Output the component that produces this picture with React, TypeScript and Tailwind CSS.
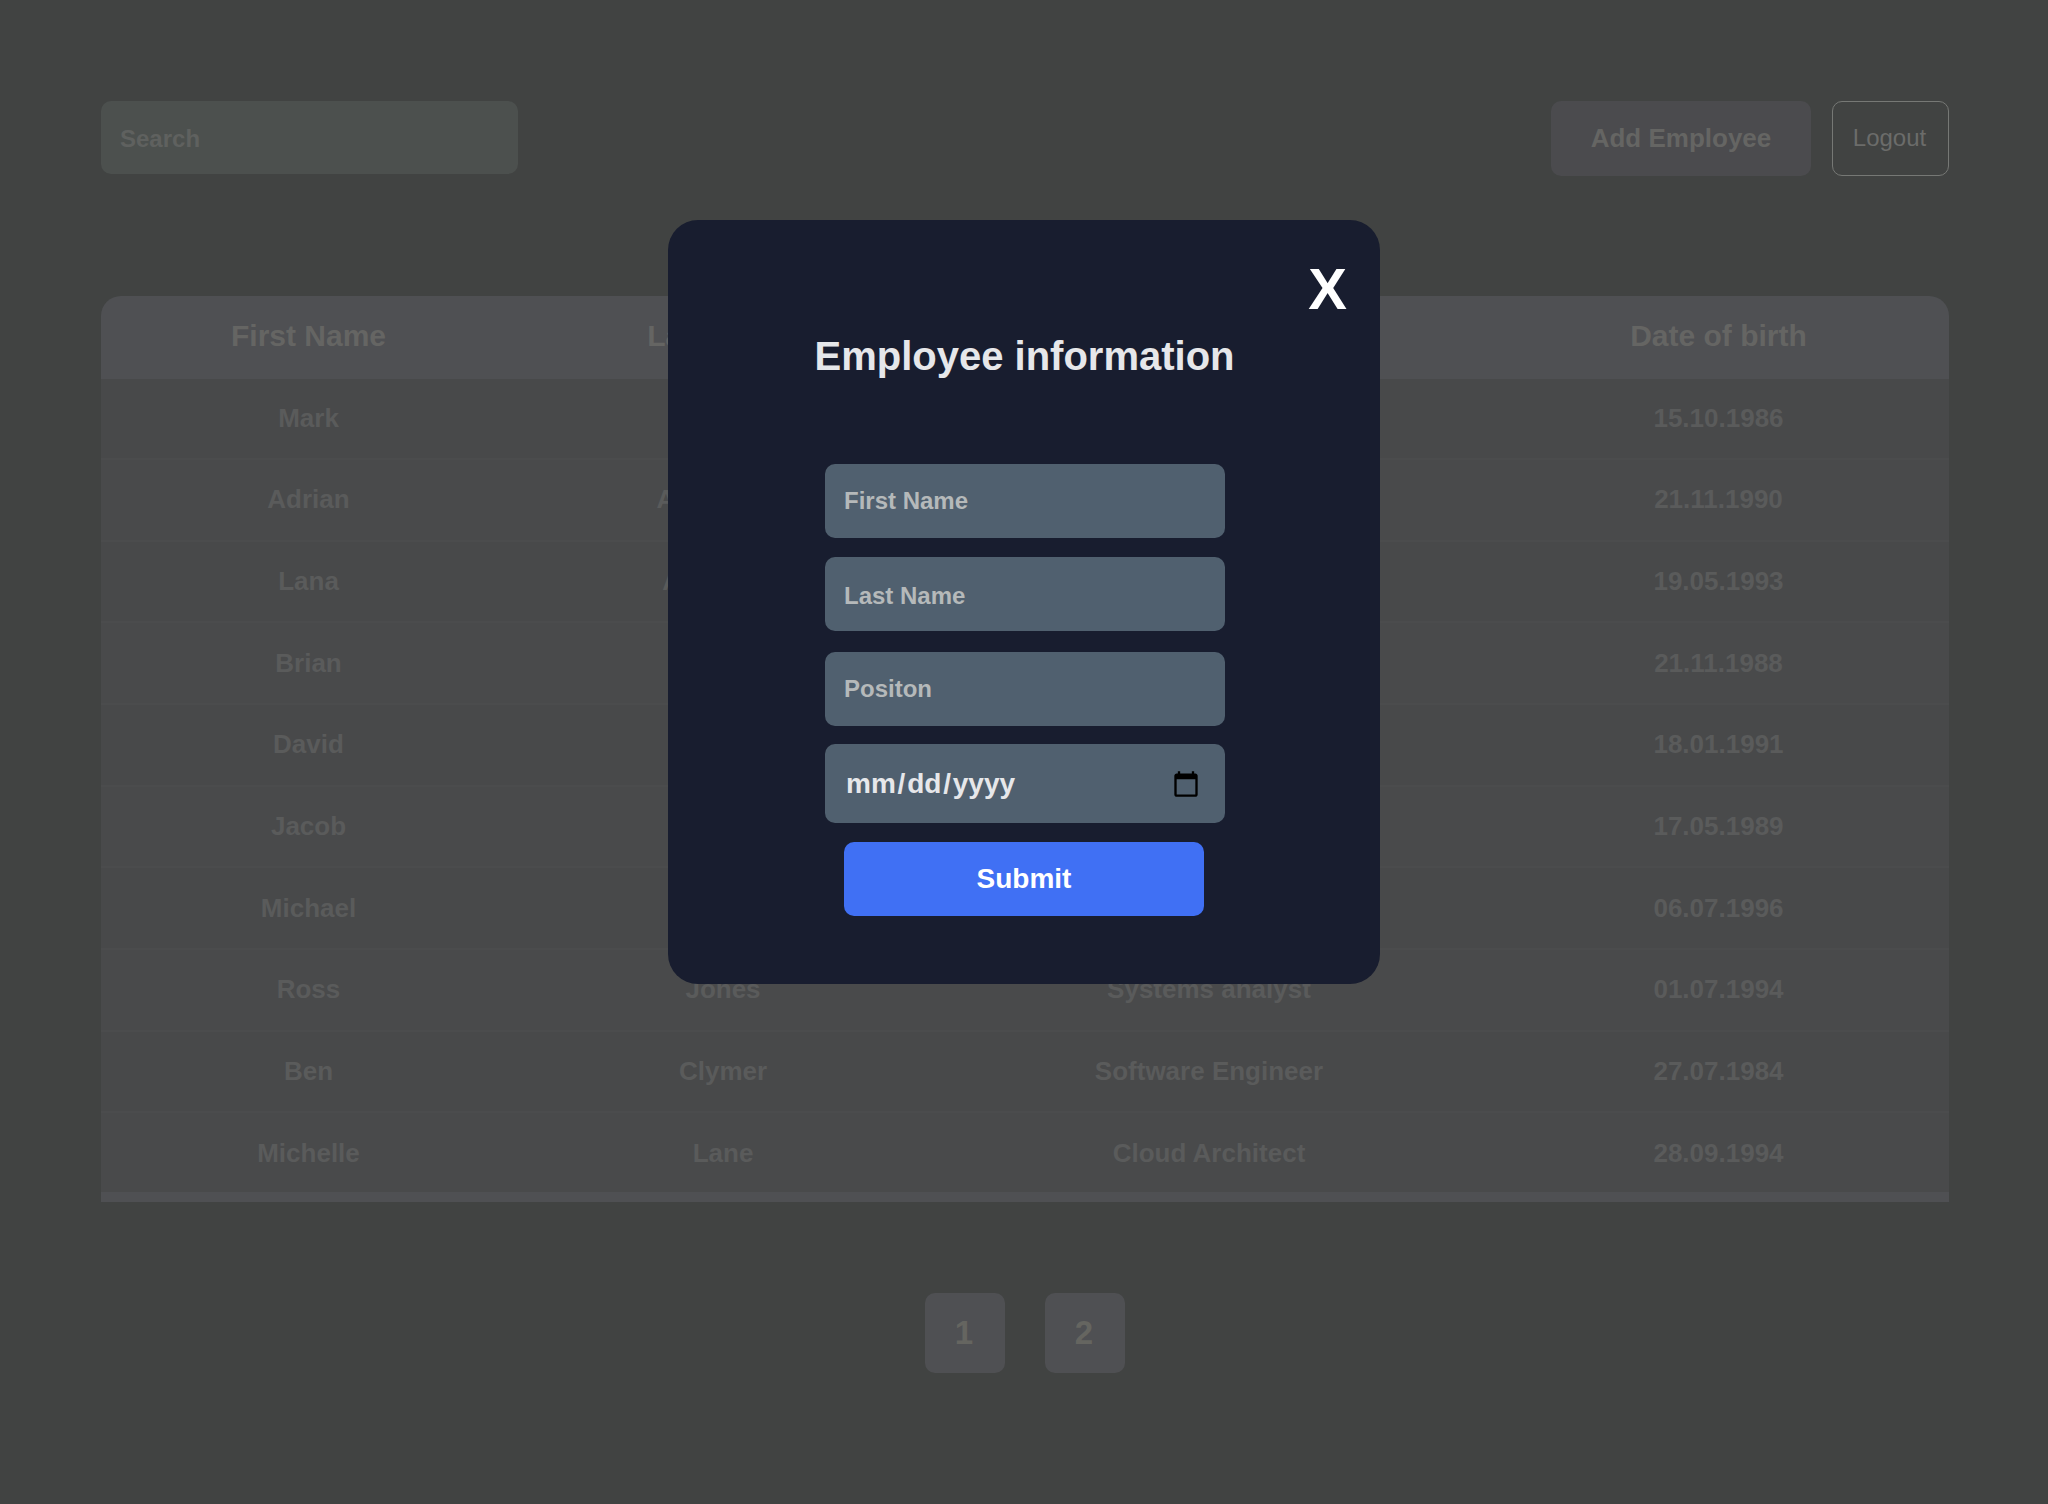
import React from "react";
import clsx from "clsx";

const employees = [
  ["Mark", "", "", "15.10.1986"],
  ["Adrian", "Armstrong", "", "21.11.1990"],
  ["Lana", "Anderson", "", "19.05.1993"],
  ["Brian", "", "", "21.11.1988"],
  ["David", "", "", "18.01.1991"],
  ["Jacob", "", "", "17.05.1989"],
  ["Michael", "", "", "06.07.1996"],
  ["Ross", "Jones", "Systems analyst", "01.07.1994"],
  ["Ben", "Clymer", "Software Engineer", "27.07.1984"],
  ["Michelle", "Lane", "Cloud Architect", "28.09.1994"],
];

const columns = ["First Name", "Last Name", "", "Date of birth"];

function Toolbar() {
  return (
    <header className="flex h-[75px] items-start justify-between">
      <input
        placeholder="Search"
        className="h-[73px] w-[417px] rounded-[10px] bg-[#4c504e] pt-[3px] pr-5 pl-[19px] text-2xl font-bold text-[#646563] outline-none placeholder:text-[#5f615f]"
      />
      <div className="flex gap-[21px]">
        <button className="h-[75px] w-[260px] rounded-[10px] bg-[#4b4b4e] text-[26px] font-bold text-[#656563]">
          Add Employee
        </button>
        <button className="h-[75px] w-[117px] rounded-[10px] border border-[#767875] pr-[2px] pb-0.5 text-2xl text-[#6b6c6a]">
          Logout
        </button>
      </div>
    </header>
  );
}

function EmployeeTable() {
  return (
    <div className="mt-[120px] h-[906px] overflow-hidden rounded-t-[20px] bg-[#4f5053]">
      <div className="grid h-[82.5px] grid-cols-[415px_414px_558px_461px] items-center pb-0.5 text-center text-3xl font-bold text-[#656563]">
        {columns.map((c, i) => (
          <div key={i}>{c}</div>
        ))}
      </div>
      <div className="h-[813.5px] overflow-hidden">
        {employees.map((row, i) => (
          <div
            key={i}
            className="grid h-[81.65px] grid-cols-[415px_414px_558px_461px] items-center border-b-2 border-[#4b4c4d] bg-[#48494a] text-center text-[26px] font-bold text-[#5a5b5b] even:bg-[#494a4b]"
          >
            {row.map((cell, j) => (
              <div key={j}>{cell}</div>
            ))}
          </div>
        ))}
      </div>
    </div>
  );
}

function Field({ label, className }: { label: string; className?: string }) {
  return (
    <input
      placeholder={label}
      className={clsx(
        "ml-[2px] h-[73.75px] w-[400px] rounded-[10px] bg-[#50606f] pr-5 pl-[19px] text-2xl font-bold text-[#e6e7ea] outline-none placeholder:text-[#b5b9ba]",
        className,
      )}
    />
  );
}

function DateField() {
  return (
    <button
      type="button"
      className="ml-[2px] flex h-[78.75px] w-[400px] items-center justify-between rounded-[10px] bg-[#50606f] pt-px pr-[25px] pl-5 text-[28px] font-bold text-[#e6e7ea]"
    >
      <span className="flex pt-px">
        <span className="px-px">mm</span>
        <span className="px-[0.8px]">/</span>
        <span className="px-px">dd</span>
        <span className="px-[0.8px]">/</span>
        <span className="px-px">yyyy</span>
      </span>
      <svg className="size-7" viewBox="0 0 24 24" fill="#000">
        <path d="M20 3h-1V1h-2v2H7V1H5v2H4c-1.1 0-2 .9-2 2v16c0 1.1.9 2 2 2h16c1.1 0 2-.9 2-2V5c0-1.1-.9-2-2-2zm0 18H4V8h16v13z" />
      </svg>
    </button>
  );
}

function EmployeeDialog() {
  return (
    <div className="absolute top-[219.5px] left-[668px] flex h-[764.5px] w-[712px] flex-col items-center rounded-[30px] bg-[#181d2f]">
      <button className="mt-[36.5px] mr-[33px] self-end text-[58px] leading-[66px] font-bold text-white">X</button>
      <h2 className="mt-[10px] pl-px text-[40px] leading-[48px] font-bold text-[#e6e7ea]">Employee information</h2>
      <form className="mt-[84.1px] flex flex-col items-center gap-[19.5px]">
        <Field label="First Name" />
        <Field label="Last Name" className="pt-[3px]" />
        <Field label="Positon" className="mt-[1.2px] mb-[-1.2px]" />
        <DateField />
        <button
          type="button"
          className="h-[73.75px] w-[360px] rounded-[10px] bg-[#4070f4] text-[28px] font-bold text-white"
        >
          Submit
        </button>
      </form>
    </div>
  );
}

export default function App() {
  return (
    <div className="relative h-[1504px] w-[2048px] overflow-hidden bg-[#414342] pt-[101px] pr-[99px] pl-[101px] font-['Liberation_Sans',Arial,sans-serif]">
      <Toolbar />
      <EmployeeTable />
      <nav className="mt-[91px] flex justify-center gap-10">
        {[1, 2].map((n) => (
          <button key={n} className="size-20 rounded-[10px] bg-[#4f5053] pr-[2px] text-[33px] font-bold text-[#656560]">
            {n}
          </button>
        ))}
      </nav>
      <EmployeeDialog />
    </div>
  );
}
